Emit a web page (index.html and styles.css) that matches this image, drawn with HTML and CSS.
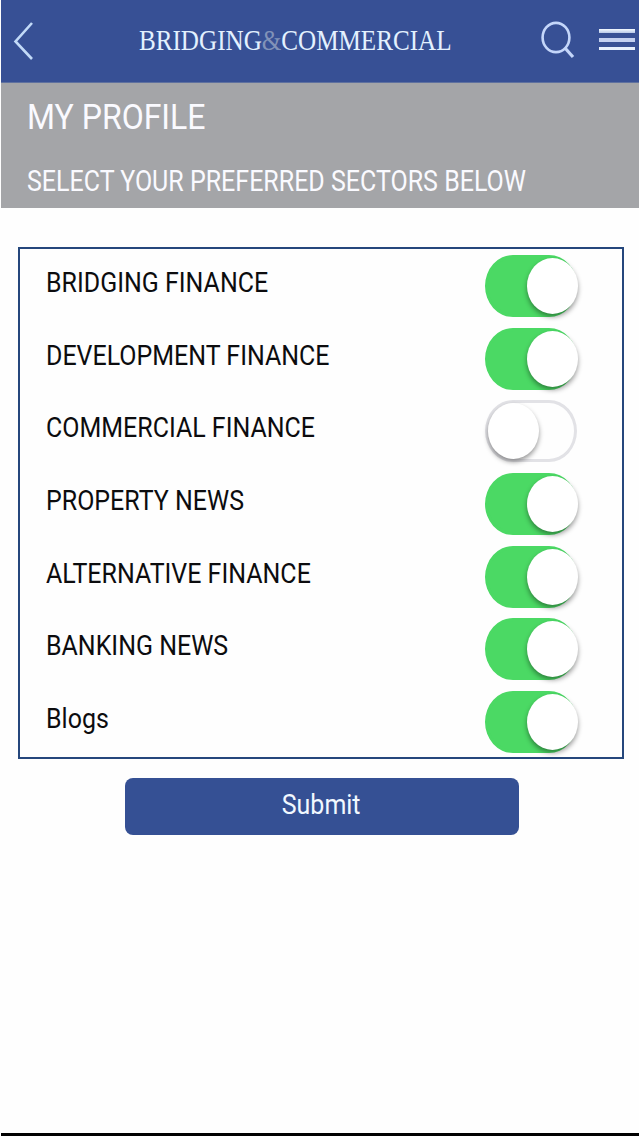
FILE: index.html
```html
<!DOCTYPE html>
<html lang="en">
<head>
    <meta charset="utf-8">
    <meta name="viewport" content="width=device-width, initial-scale=1">
    <title>My Profile</title>
    <link rel="stylesheet" href="styles.css">
</head>
<body>
    <div class="app">
        <header class="topbar">
            <a class="back" href="#" aria-label="Back">
                <svg width="22" height="40" viewBox="0 0 22 40" fill="none" stroke="#c2daf8" stroke-width="2.6">
                    <path d="M20 3 L3.5 21.5 L20 39"/>
                </svg>
            </a>
            <div class="brand"><span class="brand-text">BRIDGING<span class="amp">&amp;</span>COMMERCIAL</span></div>
            <a class="search" href="#" aria-label="Search">
                <svg width="36" height="40" viewBox="0 0 36 40" fill="none" stroke="#c4d6fa" stroke-width="2.6">
                    <ellipse cx="16" cy="17.5" rx="13.4" ry="14.6"/>
                    <path d="M25 28 L33 37" stroke-width="3.2"/>
                </svg>
            </a>
            <a class="menu" href="#" aria-label="Menu">
                <span class="bar"></span>
                <span class="bar bar-mid"></span>
                <span class="bar bar-low"></span>
            </a>
        </header>

        <div class="heading">
            <h1 class="title">MY PROFILE</h1>
            <h2 class="subtitle">SELECT YOUR PREFERRED SECTORS BELOW</h2>
        </div>

        <form class="sectors-form">
            <div class="sectors">
                <label class="row"><span class="name">BRIDGING FINANCE</span><input class="toggle" type="checkbox" checked></label>
                <label class="row"><span class="name">DEVELOPMENT FINANCE</span><input class="toggle" type="checkbox" checked></label>
                <label class="row"><span class="name">COMMERCIAL FINANCE</span><input class="toggle" type="checkbox"></label>
                <label class="row"><span class="name">PROPERTY NEWS</span><input class="toggle" type="checkbox" checked></label>
                <label class="row"><span class="name">ALTERNATIVE FINANCE</span><input class="toggle" type="checkbox" checked></label>
                <label class="row"><span class="name">BANKING NEWS</span><input class="toggle" type="checkbox" checked></label>
                <label class="row"><span class="name">Blogs</span><input class="toggle" type="checkbox" checked></label>
            </div>
            <button class="submit" type="button"><span class="submit-text">Submit</span></button>
        </form>
    </div>
</body>
</html>
```
FILE: styles.css
```css
* {
    box-sizing: border-box;
}
body {
    margin: 0;
    background: #fefefe;
    font-family: Roboto, Arial, sans-serif;
    color: #0c0c0e;
}
.app {
    display: flex;
    flex-direction: column;
    height: 1136px;
    margin-left: 1px;
    border-bottom: 3px solid #000;
    overflow: hidden;
}

/* top bar */
.topbar {
    display: flex;
    align-items: center;
    height: 83px;
    padding: 0 4px 3px 11px;
    background: #375095;
    border-bottom: 1px solid #5f719f;
}
.back,
.search {
    display: flex;
}
.brand {
    width: 312px;
    margin-left: 105px;
    font-family: "Liberation Serif", serif;
    font-size: 29px;
    line-height: 40px;
    color: #e3f1ff;
    white-space: nowrap;
}
.brand-text {
    display: inline-block;
    transform: scaleX(0.866);
    transform-origin: left;
}
.amp {
    color: #8192b8;
}
.search {
    margin-left: 89px;
}
.menu {
    display: flex;
    flex-direction: column;
    gap: 5px;
    width: 36px;
    margin-left: auto;
}
.bar {
    height: 4px;
    background: linear-gradient(#f4faff, #b8c8e8);
}
.bar-mid {
    background: #c3d0f0;
}
.bar-low {
    height: 3px;
    background: #e6effc;
}

/* grey heading */
.heading {
    height: 125px;
    padding: 14px 25px 0 26px;
    background: #a4a5a8;
    color: #fafaff;
}
.title,
.subtitle {
    margin: 0;
    font-weight: 400;
    white-space: nowrap;
    transform-origin: left;
}
.title {
    font-size: 35px;
    line-height: 42px;
    transform: scaleX(0.915);
}
.subtitle {
    margin-top: 24px;
    font-size: 29px;
    line-height: 36px;
    transform: scaleX(0.862);
}

/* sector list */
.sectors-form {
    display: flex;
    flex-direction: column;
    align-items: center;
    padding: 39px 15px 0 17px;
}
.sectors {
    display: flex;
    flex-direction: column;
    width: 100%;
    height: 512px;
    border: 2px solid #25477c;
}
.row {
    display: flex;
    flex: 1;
    align-items: center;
    justify-content: space-between;
    padding: 2px 45px 0 26px;
}
.name {
    margin-bottom: 6px;
    font-size: 28px;
    line-height: 36px;
    white-space: nowrap;
    transform: scaleX(0.892);
    transform-origin: left;
}
.toggle {
    display: flex;
    align-items: center;
    width: 92px;
    height: 62px;
    margin: 0;
    appearance: none;
    background: #fefefe;
    border: 3px solid #e2e2e6;
    border-radius: 28px / 31px;
}
.toggle::before {
    content: "";
    flex-shrink: 0;
    width: 51px;
    height: 56px;
    border-radius: 50%;
    background: #fff;
    box-shadow: 0 3px 5px rgba(0, 0, 0, 0.4);
}
.toggle:checked {
    background: #4bd964;
    border-color: #4bd964;
}
.toggle:checked::before {
    margin-left: 39px;
}

.submit {
    width: 394px;
    height: 57px;
    margin: 19px 0 0 1px;
    padding: 0 1px 5px 0;
    border: 0;
    border-radius: 8px;
    background: #355094;
    color: #f1f8ff;
    font-family: inherit;
    font-size: 28px;
}
.submit-text {
    display: inline-block;
    transform: scaleX(0.892);
}
```
